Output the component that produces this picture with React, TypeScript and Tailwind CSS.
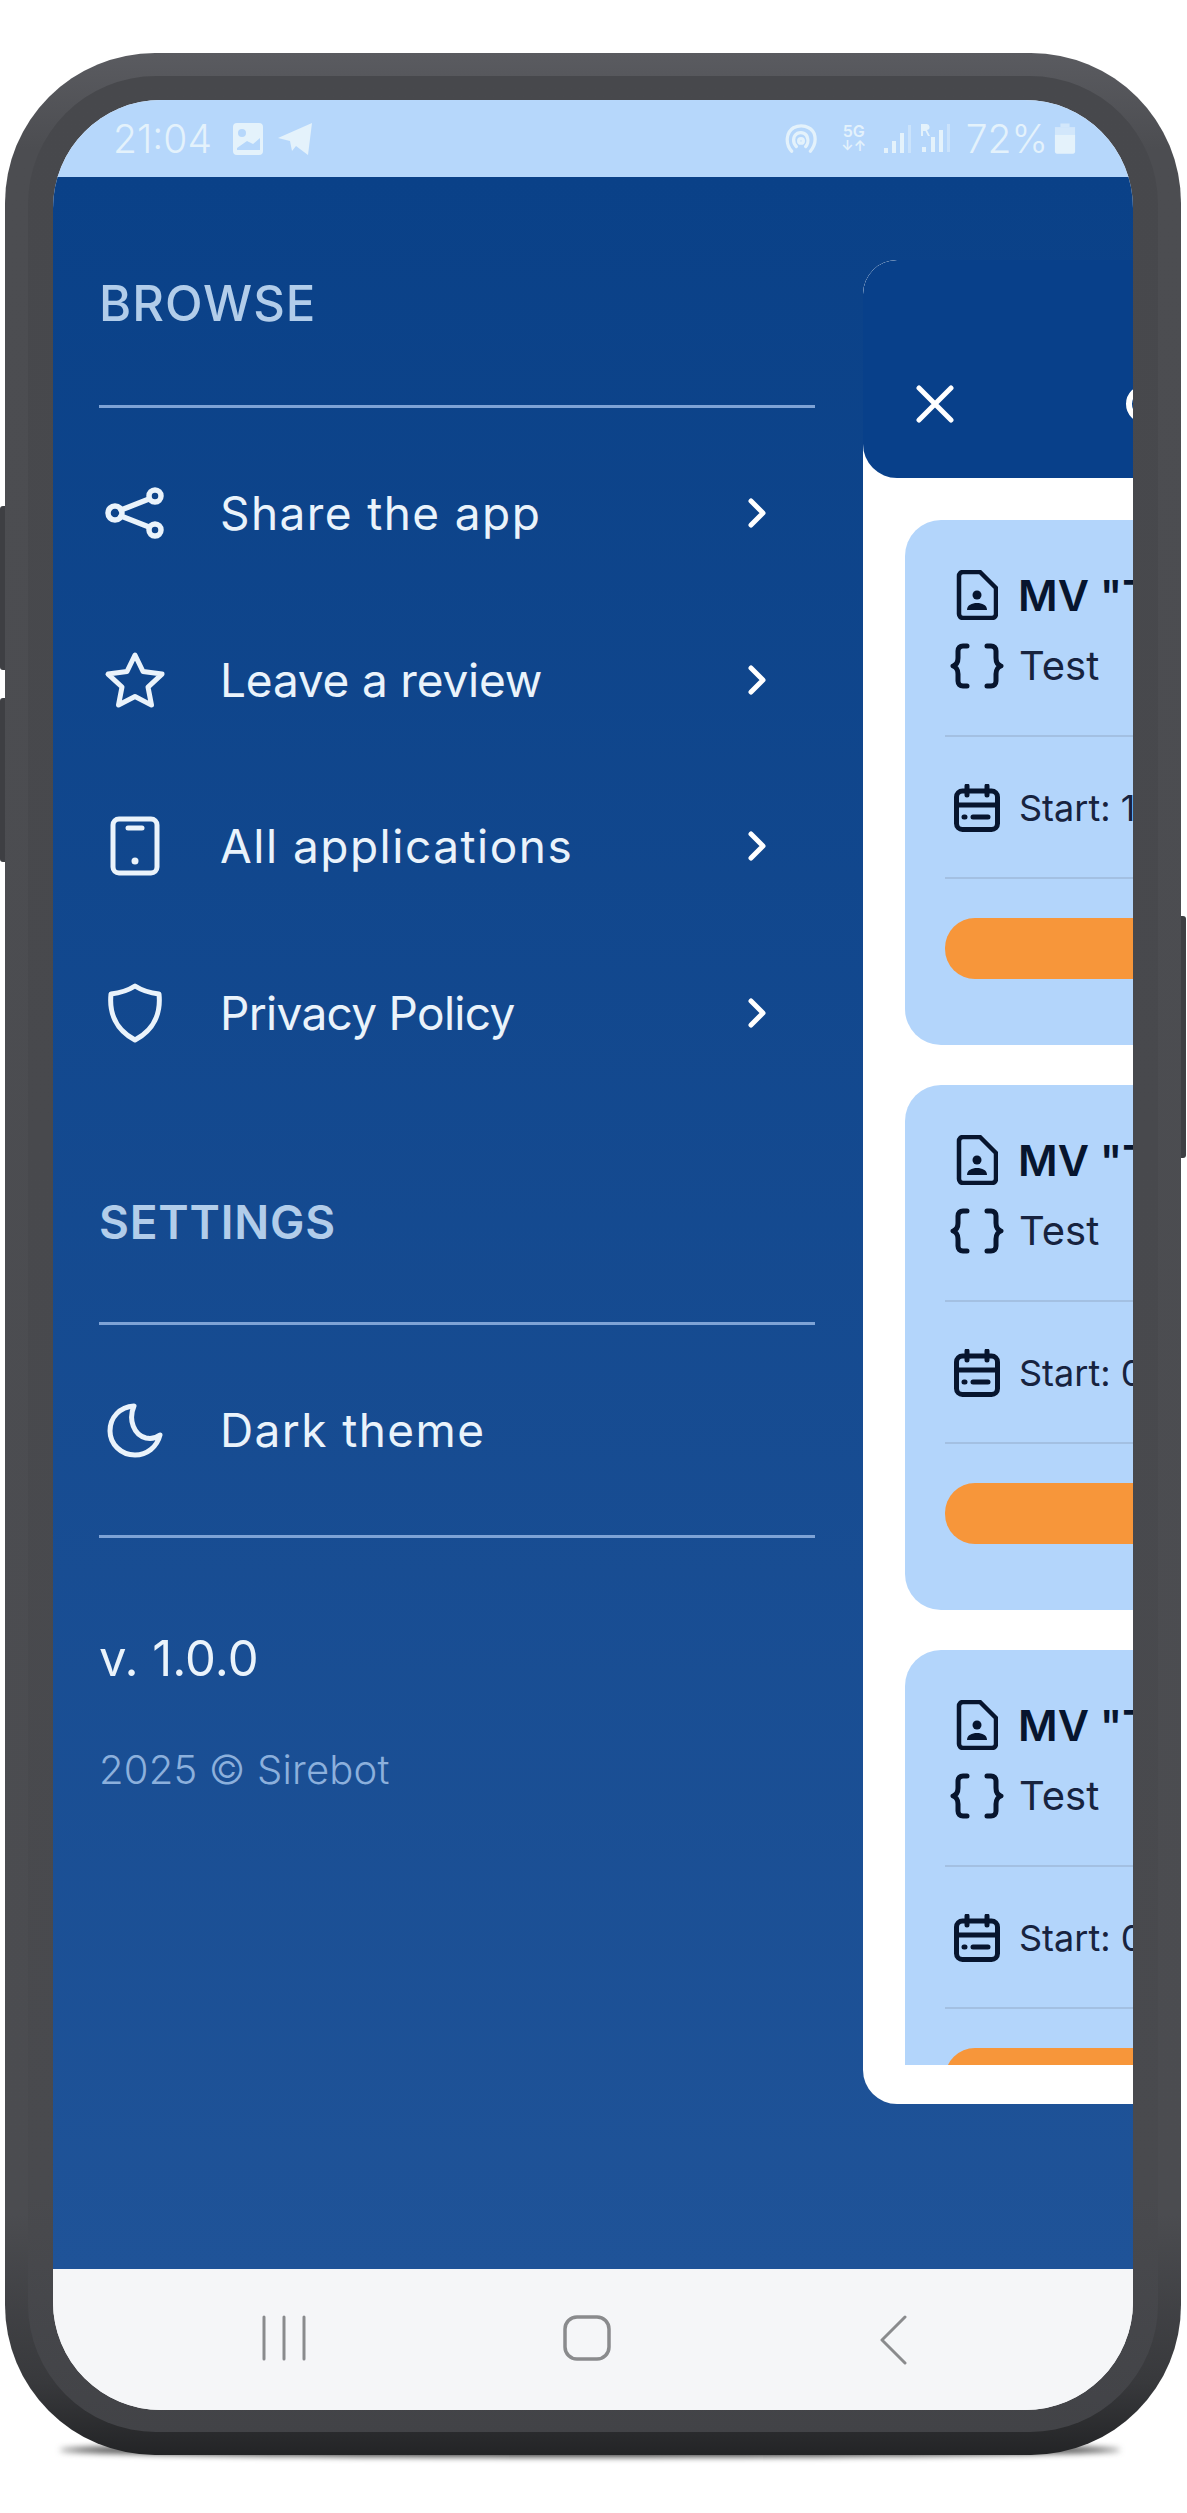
import React from "react";

const font = { fontFamily: '"Inter", "Liberation Sans", sans-serif' };

function ShareIcon() {
  return (
    <svg width="60" height="52" viewBox="0 0 60 52" fill="none" stroke="currentColor" strokeWidth="5.500" strokeLinecap="round">
      <circle cx="50" cy="9" r="6" />
      <circle cx="10" cy="26" r="7" />
      <circle cx="50" cy="43" r="6" />
      <path d="M16 23 44 12M16 29l28 11" />
    </svg>
  );
}
function StarIcon() {
  return (
    <svg width="62" height="58" viewBox="0 0 62 58" fill="none" stroke="currentColor" strokeWidth="5" strokeLinejoin="round">
      <path d="M31 4l8 16.500 19 2.600-14 13 3.500 18L31 45.500 14.500 54 18 36 4 23.100l19-2.600z" />
    </svg>
  );
}
function PhoneIcon() {
  return (
    <svg width="50" height="60" viewBox="0 0 50 60" fill="none" stroke="currentColor" strokeWidth="5" strokeLinecap="round">
      <rect x="3" y="3" width="44" height="54" rx="6" />
      <path d="M18 12h14" />
      <circle cx="25" cy="45" r="3.500" fill="currentColor" stroke="none" />
    </svg>
  );
}
function ShieldIcon() {
  return (
    <svg width="56" height="60" viewBox="0 0 56 60" fill="none" stroke="currentColor" strokeWidth="5" strokeLinejoin="round">
      <path d="M28 3c7 4.500 15 7 24 8 2 19-5 36-24 46C9 47 2 30 4 11c9-1 17-3.500 24-8z" />
    </svg>
  );
}
function MoonIcon() {
  return (
    <svg width="56" height="56" viewBox="0 0 56 56" fill="none" stroke="currentColor" strokeWidth="5" strokeLinejoin="round">
      <path d="M27 4C13 5 3 15 3 29c0 13 11 24 25 24 12 0 22-8 25-20-4 3-9 4-14 3-12-3-18-18-12-32z" />
    </svg>
  );
}
function Chevron() {
  return (
    <svg width="20" height="32" viewBox="0 0 20 32" fill="none" stroke="currentColor" strokeWidth="5" strokeLinecap="round" strokeLinejoin="round">
      <path d="M4 4l12 12L4 28" />
    </svg>
  );
}
function DocIcon() {
  return (
    <svg width="42" height="50" viewBox="0 0 42 50" fill="none" stroke="#07152e" strokeWidth="4.500" strokeLinejoin="round">
      <path d="M7 2h17l16 16v26a4 4 0 0 1-4 4H7a4 4 0 0 1-4-4V6a4 4 0 0 1 4-4z" />
      <circle cx="21" cy="25" r="4.500" fill="#07152e" stroke="none" />
      <path d="M11 40c0-5 5-7 10-7s10 2 10 7z" fill="#07152e" stroke="none" />
    </svg>
  );
}
function BracesIcon() {
  return (
    <svg width="54" height="46" viewBox="0 0 54 46" fill="none" stroke="#07152e" strokeWidth="5" strokeLinecap="round" strokeLinejoin="round">
      <path d="M17 3h-4c-3 0-5 2-5 5v7c0 4-2 7-5 8 3 1 5 4 5 8v7c0 3 2 5 5 5h4" />
      <path d="M37 3h4c3 0 5 2 5 5v7c0 4 2 7 5 8-3 1-5 4-5 8v7c0 3-2 5-5 5h-4" />
    </svg>
  );
}
function CalIcon() {
  return (
    <svg width="46" height="48" viewBox="0 0 46 48" fill="none" stroke="#07152e" strokeWidth="5" strokeLinecap="round">
      <rect x="2.500" y="7" width="41" height="38.500" rx="6" />
      <path d="M2.500 21h41M13 2v9M33 2v9M19 33h15M10 33h1" />
    </svg>
  );
}

const rows = [
  { label: "Share the app", Icon: ShareIcon, track: "tracking-[1.4px]" },
  { label: "Leave a review", Icon: StarIcon, track: "tracking-[-0.2px]" },
  { label: "All applications", Icon: PhoneIcon, track: "tracking-[1.5px]" },
  { label: "Privacy Policy", Icon: ShieldIcon, track: "tracking-[-0.7px]" },
];

function Row({ label, Icon, chevron, track }: { label: string; Icon: () => React.ReactElement; chevron?: boolean; track: string }) {
  return (
    <div className="flex h-[166.500px] items-center text-[#eaf3fb]">
      <div className="flex w-[72px] shrink-0 justify-center">
        <Icon />
      </div>
      <span className={`ml-[49px] flex-1 whitespace-nowrap text-[46px] leading-none ${track}`}>{label}</span>
      {chevron && (
        <span className="mr-[48px] flex text-white">
          <Chevron />
        </span>
      )}
    </div>
  );
}

function Card({ date }: { date: string }) {
  return (
    <div className="h-[525px] w-[500px] shrink-0 rounded-[36px] bg-[#b3d5fb] px-[40px] pt-[49px]">
      <div className="flex h-[52px] items-center">
        <span className="ml-[11px] flex w-[42px] shrink-0 justify-center"><DocIcon /></span>
        <span className="ml-[20px] whitespace-nowrap text-[43px] font-semibold leading-none text-[#07152e]">MV "Test"</span>
      </div>
      <div className="mt-[21px] flex h-[48px] items-center">
        <span className="ml-[5px] flex w-[54px] shrink-0 justify-center"><BracesIcon /></span>
        <span className="ml-[15px] whitespace-nowrap text-[40px] leading-none text-[#17233f]">Test</span>
      </div>
      <div className="mt-[45px] h-[2px] bg-[#a3c0e2]" />
      <div className="mt-[47px] flex h-[48px] items-center">
        <span className="ml-[9px] flex w-[46px] shrink-0 justify-center"><CalIcon /></span>
        <span className="ml-[19px] whitespace-nowrap text-[36px] leading-none text-[#17233f]">Start: {date}</span>
      </div>
      <div className="mt-[45px] h-[2px] bg-[#a3c0e2]" />
      <div className="mt-[39px] h-[61px] rounded-[30px] bg-[#f7963a]" />
    </div>
  );
}

export default function App() {
  return (
    <div style={font} className="relative h-[2513px] w-[1187px] overflow-hidden bg-white pt-[53px]">
      {/* shadow under the phone */}
      <div className="absolute left-[60px] top-[2443px] h-[14px] w-[1060px] rounded-[50%] bg-[#3a3a3a] blur-[3px]" />
      {/* hardware buttons */}
      <div className="absolute left-0 top-[506px] h-[164px] w-[8px] rounded-l-[3px] bg-[#3e3f43]" />
      <div className="absolute left-0 top-[698px] h-[164px] w-[8px] rounded-l-[3px] bg-[#3e3f43]" />
      <div className="absolute left-[1176px] top-[916px] h-[242px] w-[10px] rounded-r-[3px] bg-[#3e3f43]" />

      <div className="relative ml-[5px] h-[2402px] w-[1176px] rounded-[150px] bg-[linear-gradient(to_bottom,#5a5b60_0%,#4c4d51_4%,#4b4c50_90%,#38393c_97%,#232426_100%)] p-[23px]">
        <div className="h-full w-full rounded-[128px] bg-[linear-gradient(to_bottom,#47484c_0%,#494a4e_90%,#424347_100%)] px-[25px] pb-[22px] pt-[24px]">
          <div className="flex h-full w-full flex-col overflow-hidden rounded-[108px] bg-[#f5f6f8]">
            {/* status bar */}
            <div className="flex h-[77px] shrink-0 items-center justify-between bg-[#b6d7fb] pl-[60px] pr-[57px] text-[#e4f2fb]">
              <div className="flex items-center">
                <span className="text-[39px] font-light leading-none">21:04</span>
                <svg className="ml-[20px] shrink-0" width="32" height="34" viewBox="0 0 32 34" fill="currentColor">
                  <path fillRule="evenodd" d="M5 1h22a4 4 0 0 1 4 4v24a4 4 0 0 1-4 4H5a4 4 0 0 1-4-4V5a4 4 0 0 1 4-4zm5 6a4 4 0 1 0 0 8 4 4 0 0 0 0-8zm18 9-7 6-6-3-10 7v2h23z" />
                </svg>
                <svg className="ml-[13px] shrink-0" width="36" height="34" viewBox="0 0 36 34" fill="currentColor">
                  <path d="M35 1 31 33 19 24l-4 5-2-10L1 16z" />
                </svg>
              </div>
              <div className="flex items-center">
                <svg width="34" height="30" viewBox="0 0 36 32" fill="none" stroke="currentColor" strokeWidth="3.500" strokeLinecap="round">
                  <path d="M8 29C1 21 2 9 10 4c8-4 18-2 22 6 2 6 1 13-4 19" />
                  <path d="M13 24c-4-4-4-11 1-14 5-2 10 0 11 5 1 3 0 7-2 9" />
                  <circle cx="18" cy="18" r="2.500" />
                </svg>
                <div className="ml-[22px] flex w-[28px] flex-col items-center text-[16px] font-semibold leading-[15px]">
                  <span>5G</span>
                  <span className="text-[14px] leading-[14px]">↓↑</span>
                </div>
                <svg className="ml-[15px]" width="30" height="30" viewBox="0 0 30 30" fill="currentColor">
                  <rect x="1" y="24" width="4" height="5" />
                  <rect x="9" y="17" width="4" height="12" />
                  <rect x="17" y="9" width="4" height="20" />
                  <rect x="25" y="1" width="3" height="28" opacity="0.45" />
                </svg>
                <svg className="ml-[7px]" width="32" height="32" viewBox="0 0 32 32" fill="currentColor">
                  <rect x="2" y="24" width="4" height="5" />
                  <rect x="11" y="14" width="4" height="15" />
                  <rect x="19" y="7" width="4" height="22" />
                  <rect x="27" y="1" width="3" height="28" opacity="0.45" />
                  <path d="M1 1h5a3 3 0 0 1 1 6l3 6H8L5.500 8H3v5H1z" />
                </svg>
                <span className="ml-[14px] text-[39px] font-light leading-none">72%</span>
                <svg className="ml-[6px]" width="22" height="32" viewBox="0 0 24 34" fill="currentColor">
                  <path d="M7 0h10v4H7z" opacity="0.6" />
                  <rect x="1" y="4" width="22" height="8" opacity="0.6" />
                  <path d="M1 12h22v19a2 2 0 0 1-2 2H3a2 2 0 0 1-2-2z" />
                </svg>
              </div>
            </div>

            {/* main area */}
            <div className="flex min-h-0 flex-1 bg-[linear-gradient(to_bottom,#0a4188,#1f5398)]">
              {/* drawer */}
              <div className="w-[810px] shrink-0 pl-[46px] pr-[48px]">
                <div className="h-[228px] pt-[103px] text-[49px] font-medium leading-[48px] tracking-[1px] text-[#b2cdea]">BROWSE</div>
                <div className="h-[3px] bg-[#7ea3d6]" />
                <div className="mt-[22px]">
                  {rows.map((r) => (
                    <Row key={r.label} label={r.label} Icon={r.Icon} track={r.track} chevron />
                  ))}
                </div>
                <div className="mt-[102px] text-[46px] font-semibold leading-[48px] tracking-[0.8px] text-[#b2cdea]">SETTINGS</div>
                <div className="mt-[76px] h-[3px] bg-[#7ea3d6]" />
                <div className="flex h-[210px] flex-col justify-center">
                  <Row label="Dark theme" Icon={MoonIcon} track="tracking-[1.4px]" />
                </div>
                <div className="h-[3px] bg-[#7ea3d6]" />
                <div className="mt-[97px] text-[49px] leading-[48px] text-[#eaf3fb]">v. 1.0.0</div>
                <div className="mt-[65px] text-[40px] font-light leading-[44px] tracking-[0.2px] text-[#8cb0dc]">2025 © Sirebot</div>
              </div>

              {/* panel */}
              <div className="mt-[83px] flex h-[1844px] min-w-0 flex-1 flex-col overflow-hidden rounded-l-[34px] bg-white">
                <div className="flex h-[218px] shrink-0 items-center overflow-hidden rounded-l-[34px] bg-[#08408a] pl-[53px] text-white">
                  <svg className="mt-[70px] shrink-0" width="38" height="38" viewBox="0 0 38 38" fill="none" stroke="currentColor" strokeWidth="5" strokeLinecap="round">
                    <path d="M3 3l32 32M35 3 3 35" />
                  </svg>
                  <svg className="ml-[171px] mt-[70px] shrink-0" width="40" height="40" viewBox="0 0 40 40" fill="none" stroke="currentColor" strokeWidth="6">
                    <circle cx="20" cy="20" r="16" />
                  </svg>
                </div>
                <div className="mt-[42px] flex h-[1545px] flex-col gap-[40px] overflow-hidden pl-[42px]">
                  <Card date="12.03.2025" />
                  <Card date="03.02.2025" />
                  <Card date="03.02.2025" />
                </div>
              </div>
            </div>

            {/* navigation bar */}
            <div className="flex h-[141px] shrink-0 items-start bg-[#f5f6f8] pt-[46px]">
              <svg className="ml-[208px] shrink-0" width="46" height="46" viewBox="0 0 46 46" fill="none" stroke="#8a8b8d" strokeWidth="3" strokeLinecap="round">
                <path d="M3 2v42M23 2v42M43 2v42" />
              </svg>
              <svg className="ml-[256px] shrink-0" width="48" height="46" viewBox="0 0 48 46" fill="none" stroke="#8a8b8d" strokeWidth="3.500">
                <rect x="2" y="2" width="44" height="42" rx="12" />
              </svg>
              <svg className="ml-[268px] shrink-0" width="28" height="50" viewBox="0 0 28 50" fill="none" stroke="#8a8b8d" strokeWidth="3" strokeLinecap="round" strokeLinejoin="round">
                <path d="M26 2 3 25l23 23" />
              </svg>
            </div>
          </div>
        </div>
      </div>
    </div>
  );
}
